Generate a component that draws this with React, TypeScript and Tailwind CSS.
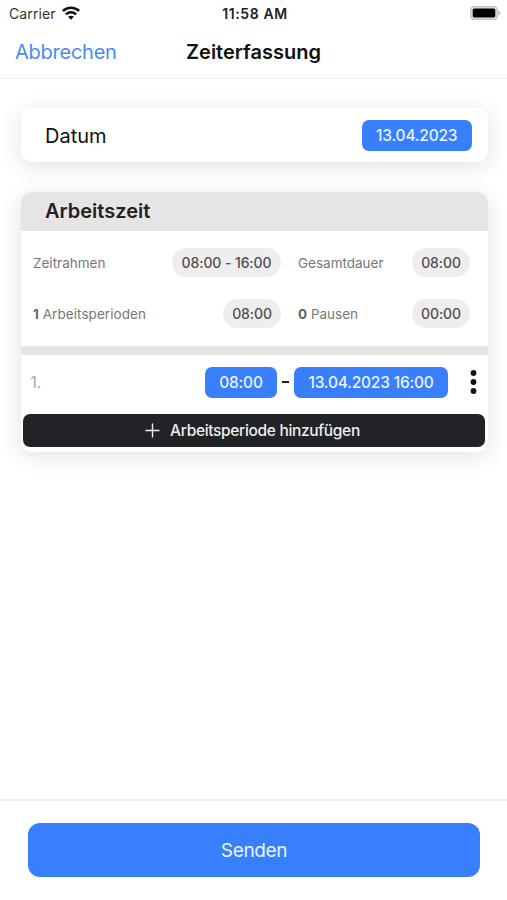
import type { ReactNode } from "react";

function Pill({ children, className }: { children: ReactNode; className: string }) {
  return (
    <span className={`flex h-[29px] shrink-0 items-center justify-center whitespace-nowrap rounded-full bg-[#eeeeee] text-[14px] font-medium tracking-[-0.1px] text-[#505050] ${className}`}>
      {children}
    </span>
  );
}

function DateButton({ children, className }: { children: ReactNode; className: string }) {
  return (
    <button className={`flex h-[31px] shrink-0 items-center justify-center whitespace-nowrap rounded-[7px] bg-[#387ffe] text-[15.5px] font-medium tracking-[-0.2px] text-[#eaf3ff] ${className}`}>
      {children}
    </button>
  );
}

function WifiIcon() {
  return (
    <svg width="18" height="14" viewBox="0 0 18 14" fill="none" stroke="#111" strokeWidth="2.5">
      <path d="M.9 5C5.300.6 12.700.6 17.100 5" />
      <path d="M3.900 8.300c2.900-2.800 7.300-2.800 10.200 0" />
      <path d="M6.100 10.800c1.700-1.500 4.100-1.500 5.800 0L9 13.700z" fill="#111" stroke="none" />
    </svg>
  );
}

function BatteryIcon() {
  return (
    <svg width="31" height="14" viewBox="0 0 31 14">
      <rect x=".8" y=".6" width="26.400" height="12.800" rx="3.400" fill="#e4e4e4" stroke="#c0c0c0" strokeWidth="1.200" />
      <rect x="2.700" y="2.500" width="22.600" height="9" rx="1.600" fill="#000" />
      <path d="M28.500 4.800c2.300.7 2.300 3.700 0 4.400z" fill="#aaa" />
    </svg>
  );
}

function MoreIcon() {
  return (
    <svg width="13" height="24" viewBox="0 0 13 24" fill="#111">
      <circle cx="6.500" cy="3" r="2.900" />
      <circle cx="6.500" cy="12" r="2.900" />
      <circle cx="6.500" cy="21" r="2.900" />
    </svg>
  );
}

export default function App() {
  return (
    <div className="flex h-[900px] w-[507px] flex-col overflow-hidden bg-white font-['Inter','Liberation_Sans',sans-serif] text-[#111]">
      <div className="grid h-[27px] shrink-0 grid-cols-3 items-center pl-[9px] pr-[6px] text-[13.5px]">
        <div className="flex items-center gap-[6px]">
          <span className="text-[14px] tracking-[0.1px] text-[#333]">Carrier</span>
          <div className="pb-[1px]"><WifiIcon /></div>
        </div>
        <span className="whitespace-nowrap text-center text-[14px] font-semibold tracking-[0.6px] text-[#222]">11:58 AM</span>
        <div className="flex justify-end pb-[1px]"><BatteryIcon /></div>
      </div>
      <header className="grid h-[52px] shrink-0 grid-cols-[1fr_auto_1fr] items-center border-b border-[#ececec] px-[15px] pb-[2px]">
        <button className="justify-self-start text-[20px] tracking-[-0.25px] text-[#4a8bf5]">Abbrechen</button>
        <h1 className="text-[20px] font-semibold">Zeiterfassung</h1>
      </header>

      <main className="flex flex-1 flex-col pl-[20.5px] pr-[19.500px] pt-[29px]">
        <section className="flex h-[54px] shrink-0 items-center justify-between rounded-[11px] bg-white pl-[24.500px] pr-[16px] shadow-[0_4px_22px_rgba(0,0,0,0.12)]">
          <span className="pt-px text-[20px]">Datum</span>
          <DateButton className="w-[109.500px] pt-[1px]">13.04.2023</DateButton>
        </section>

        <section className="mt-[29.500px] flex h-[260.500px] shrink-0 flex-col rounded-[11px] bg-white shadow-[0_4px_22px_rgba(0,0,0,0.12)]">
          <div className="flex h-[39px] shrink-0 items-center rounded-t-[11px] bg-[#e5e5e5] pl-[24.500px]">
            <h2 className="text-[20px] font-semibold text-[#222]">Arbeitszeit</h2>
          </div>
          <div className="grid h-[115px] shrink-0 grid-cols-[248px_172px] content-start gap-x-[17px] gap-y-[22px] pl-[12.500px] pt-[17.500px] text-[13.5px] text-[#777]">
            <div className="flex items-center justify-between">
              <span className="pt-px">Zeitrahmen</span>
              <Pill className="w-[109px]">08:00 - 16:00</Pill>
            </div>
            <div className="flex items-center justify-between">
              <span className="pt-px">Gesamtdauer</span>
              <Pill className="w-[58px]">08:00</Pill>
            </div>
            <div className="flex items-center justify-between">
              <span className="pt-px tracking-[0.06px]"><b className="font-bold text-[#666]">1</b> Arbeitsperioden</span>
              <Pill className="w-[58px]">08:00</Pill>
            </div>
            <div className="flex items-center justify-between">
              <span className="pt-px"><b className="font-bold text-[#666]">0</b> Pausen</span>
              <Pill className="w-[58px]">00:00</Pill>
            </div>
          </div>
          <div className="h-[9px] shrink-0 bg-[#e5e5e5]" />
          <div className="flex h-[59px] shrink-0 items-center pb-[3.500px] pl-[10px] pr-[7.500px]">
            <span className="text-[15.5px] text-[#aaa]">1.</span>
            <DateButton className="ml-auto w-[72px]">08:00</DateButton>
            <span className="flex w-[17px] justify-center"><i className="h-[2px] w-[7px] bg-[#222]" /></span>
            <DateButton className="w-[154px]">13.04.2023 16:00</DateButton>
            <button className="ml-[19px]"><MoreIcon /></button>
          </div>
          <button className="mx-[2.500px] flex h-[33.500px] shrink-0 items-center justify-center gap-[10px] rounded-[7px] bg-[#222327] pr-[3px] text-[15.5px] font-medium tracking-[-0.33px] text-[#eee]">
            <svg width="15" height="15" viewBox="0 0 15 15" stroke="currentColor" strokeWidth="1.400"><path d="M.5 7.500h14M7.500.5v14" /></svg>
            <span>Arbeitsperiode hinzufügen</span>
          </button>
        </section>
      </main>

      <footer className="h-[101px] shrink-0 border-t-2 border-[#f0f0f0] pl-[28px] pr-[27px] pt-[22px]">
        <button className="flex h-[54px] w-full items-center justify-center rounded-[12px] bg-[#387ffe] pt-[2px] text-[19px] tracking-[-0.35px] text-[#eaf3ff]">Senden</button>
      </footer>
    </div>
  );
}
